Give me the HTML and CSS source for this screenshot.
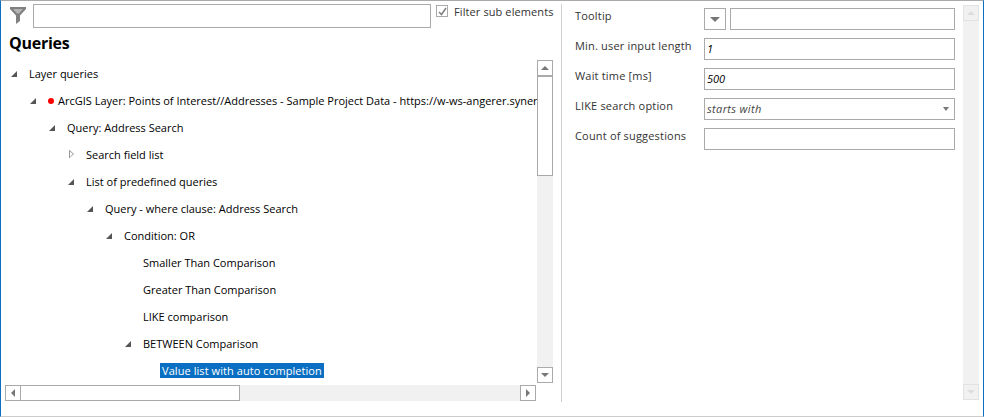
FILE: index.html
```html
<!DOCTYPE html>
<html lang="en">
<head>
<meta charset="utf-8">
<title>Queries</title>
<link rel="stylesheet" href="styles.css">
</head>
<body>
<div class="window">
  <section class="left">
    <div class="filter">
      <svg class="funnel" width="16" height="17" viewBox="0 0 16 17"><path d="M0 0H16V2L10 8.5V14L6 17V8.5L0 2Z" fill="#808080"/><path d="M3 2H13L9 6.5H7Z" fill="#b4b4b4"/></svg>
      <div class="box filter-input"></div>
      <span class="check"><svg width="9" height="9" viewBox="0 0 9 9"><path d="M1 5L3.5 7.5L8 1" fill="none" stroke="#808080" stroke-width="1.5"/></svg></span>
      <span class="check-label">Filter sub elements</span>
    </div>
    <h1 class="title">Queries</h1>
    <div class="tree-area">
      <div class="tree-row">
        <div class="tree">
          <div class="node l0"><i class="arrow open"></i><span>Layer queries</span></div>
          <div class="node l1"><i class="arrow open"></i><b class="dot"></b><span>ArcGIS Layer: Points of Interest//Addresses - Sample Project Data - https://w-ws-angerer.syner</span></div>
          <div class="node l2"><i class="arrow open"></i><span>Query: Address Search</span></div>
          <div class="node l3"><i class="arrow closed"></i><span>Search field list</span></div>
          <div class="node l3"><i class="arrow open"></i><span>List of predefined queries</span></div>
          <div class="node l4"><i class="arrow open"></i><span>Query - where clause: Address Search</span></div>
          <div class="node l5"><i class="arrow open"></i><span>Condition: OR</span></div>
          <div class="node l6"><i class="arrow none"></i><span>Smaller Than Comparison</span></div>
          <div class="node l6"><i class="arrow none"></i><span>Greater Than Comparison</span></div>
          <div class="node l6"><i class="arrow none"></i><span>LIKE comparison</span></div>
          <div class="node l6"><i class="arrow open"></i><span>BETWEEN Comparison</span></div>
          <div class="node l7"><i class="arrow none"></i><span class="selected">Value list with auto completion</span></div>
        </div>
        <div class="vbar">
          <div class="sb-btn"><i class="tri up"></i></div>
          <div class="vtrack"><div class="vthumb"></div></div>
          <div class="sb-btn"><i class="tri down"></i></div>
        </div>
      </div>
      <div class="hbar">
        <div class="sb-btn"><i class="tri left-tri"></i></div>
        <div class="htrack"><div class="hthumb"></div></div>
        <div class="sb-btn"><i class="tri right-tri"></i></div>
      </div>
    </div>
  </section>
  <section class="right">
    <div class="form">
      <label>Tooltip</label>
      <div class="tooltip-field"><div class="box drop"><i class="tri down big"></i></div><div class="box grow"></div></div>
      <label>Min. user input length</label>
      <div class="box value">1</div>
      <label>Wait time [ms]</label>
      <div class="box value">500</div>
      <label>LIKE search option</label>
      <div class="box value select"><span>starts with</span><i class="tri down small"></i></div>
      <label>Count of suggestions</label>
      <div class="box value"></div>
    </div>
    <div class="vbar disabled">
      <div class="sb-btn"><i class="tri up"></i></div>
      <div class="vtrack"></div>
      <div class="sb-btn"><i class="tri down"></i></div>
    </div>
  </section>
</div>
</body>
</html>
```
FILE: styles.css
```css
* { box-sizing: border-box; }
html, body { margin: 0; height: 100%; background: #fff; }
body { font-family: "Open Sans", "Noto Sans", sans-serif; font-size: 11px; color: #000; overflow: hidden; }
.window {
  width: 984px; height: 417px;
  display: flex;
  border-top: 1px solid #aaa;
  border-bottom: 1px solid #ccc;
  border-left: 1px solid #0a6fc2;
  border-right: 1px solid #0a6fc2;
  padding: 3px 4px 14px 4px;
}
.left { width: 557px; border-right: 1px solid #d0d0d0; flex: none; display: flex; flex-direction: column; }
.filter { display: flex; align-items: flex-start; height: 24px; }
.funnel { margin: 3px 7px 0 5px; flex: none; }
.box { border: 1px solid #aaa; background: #fff; }
.filter-input { width: 398px; height: 24px; flex: none; }
.check { width: 12px; height: 12px; border: 1px solid #aaa; margin: 1px 6px 0 5px; display: flex; align-items: center; justify-content: center; flex: none; }
.check-label { line-height: 16px; color: #333; white-space: nowrap; letter-spacing: 0.1px; }
.title { font-size: 16px; line-height: 22px; font-weight: 700; letter-spacing: -0.25px; margin: 4px 0 0 4px; height: 28px; }
.tree-area { flex: 1; min-height: 0; display: flex; flex-direction: column; width: 548px; }
.tree-row { display: flex; height: 323px; }
.tree { width: 532px; overflow: hidden; flex: none; }
.node { height: 27px; display: flex; align-items: center; white-space: nowrap; }
.l0 { padding-left: 0; }
.l1 { padding-left: 19px; }
.l2 { padding-left: 38px; }
.l3 { padding-left: 57px; }
.l4 { padding-left: 76px; }
.l5 { padding-left: 95px; }
.l6 { padding-left: 114px; }
.l7 { padding-left: 133px; }
.arrow { width: 24px; height: 10px; flex: none; position: relative; display: block; }
.arrow.open::before { content: ""; position: absolute; left: 6px; top: 2px; width: 0; height: 0; border-style: solid; border-width: 0 0 6px 6px; border-color: transparent transparent #555 transparent; }
.arrow.closed::before { content: ""; position: absolute; left: 7px; top: 0; width: 5px; height: 9px; background: #999; clip-path: polygon(0 0, 100% 50%, 0 100%, 0 0, 1px 2px, 1px 7.5px, 3.8px 4.5px, 1px 2px); }
.dot { width: 6px; height: 6px; border-radius: 50%; background: #f00; margin-right: 4px; flex: none; }
.selected { background: #0a6fc2; color: #fff; padding: 0 2px; margin-left: -2px; line-height: 15px; height: 15px; letter-spacing: 0.07px; }
.vbar { width: 16px; flex: none; display: flex; flex-direction: column; background: #f1f1f1; }
.sb-btn { width: 16px; height: 16px; border: 1px solid #aaa; background: #fff; display: flex; align-items: center; justify-content: center; flex: none; }
.vtrack { flex: 1; min-height: 0; }
.vthumb { height: 100px; border: 1px solid #aaa; background: #fff; }
.hbar { display: flex; height: 16px; margin-top: 2px; width: 531px; background: #f1f1f1; }
.htrack { flex: 1; min-width: 0; }
.hthumb { width: 220px; height: 16px; border: 1px solid #aaa; background: #fff; margin-left: -1px; }
.tri { display: block; width: 0; height: 0; border-style: solid; }
.tri.up { border-width: 0 4px 4px 4px; border-color: transparent transparent #777 transparent; }
.tri.down { border-width: 4px 4px 0 4px; border-color: #777 transparent transparent transparent; }
.tri.left-tri { border-width: 4px 4px 4px 0; border-color: transparent #777 transparent transparent; }
.tri.right-tri { border-width: 4px 0 4px 4px; border-color: transparent transparent transparent #777; }
.tri.small { border-width: 4px 3.5px 0 3.5px; }
.tri.big { border-width: 5px 5px 0 5px; }
.right { flex: 1; min-width: 0; display: flex; justify-content: space-between; padding: 1px 0 0 13px; }
.form { width: 381px; display: grid; grid-template-columns: 129px 251px; grid-auto-rows: 30px; align-content: start; padding-top: 3px; }
.form label { color: #333; line-height: 16px; letter-spacing: 0.18px; white-space: nowrap; }
.tooltip-field { display: flex; gap: 4px; height: 22px; }
.drop { width: 22px; height: 22px; display: flex; align-items: center; justify-content: center; flex: none; }
.grow { flex: 1; }
.value { height: 22px; line-height: 20px; font-style: italic; padding: 0 2px; }
.select { display: flex; align-items: center; justify-content: space-between; color: #444; padding-right: 5px; letter-spacing: 0.35px; }
.disabled { height: 395px; }
.disabled .sb-btn { border-color: #e2e2e2; background: #f1f1f1; }
.disabled .tri.up { border-bottom-color: #ddd; }
.disabled .tri.down { border-top-color: #ddd; }
```
